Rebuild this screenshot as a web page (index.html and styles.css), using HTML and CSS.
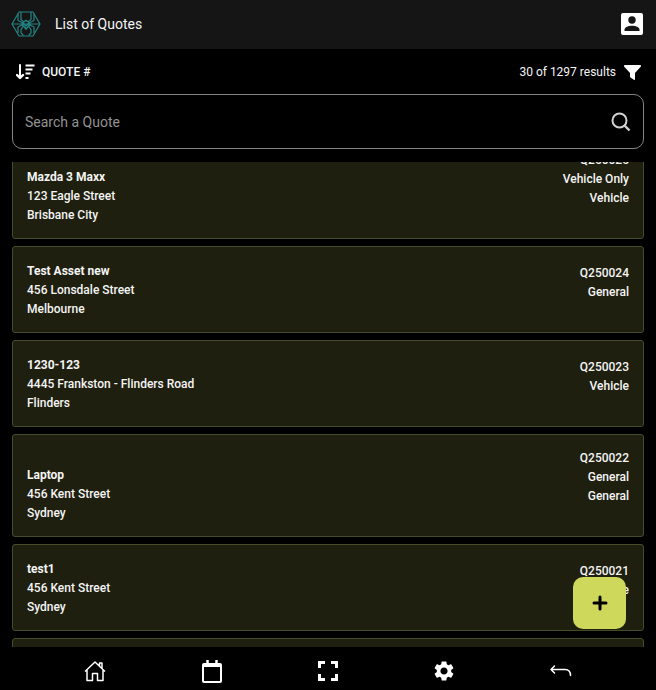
FILE: index.html
```html
<!DOCTYPE html>
<html lang="en">
<head>
<meta charset="utf-8">
<meta name="viewport" content="width=device-width, initial-scale=1">
<title>List of Quotes</title>
<link rel="stylesheet" href="styles.css">
</head>
<body>

    <header class="topbar">
        <a class="logo" href="#" aria-label="Home">
            <svg width="30" height="28" viewBox="0 0 30 28" fill="none" stroke="#238583" stroke-width="1.2">
                <path d="M8 2h14l7 12-7 12H8L1 14z"/>
                <path d="M10 2v7.500l3 2.500M20 2v7.500L17 12M7 4v6.500l5 2.500M23 4v6.500L18 13M1 14h28"/>
                <path d="M12 14.500L7 17v6M18 14.500l5 2.500v6M12.500 16L10 19.500V23l2.500 2.500M17.500 16l2.500 3.500V23l-2.500 2.500"/>
                <path d="M12 12.500l3-2 3 2 1 2-4 4.500-4-4.500zM12 13l3 3 3-3" stroke-width="1.5"/>
            </svg>
        </a>
        <h1>List of Quotes</h1>
        <button class="icon-button" aria-label="Account">
            <svg width="22" height="22" viewBox="0 0 22 22">
                <rect width="22" height="22" rx="2" fill="#fff"/>
                <circle cx="11" cy="7" r="3.7" fill="#151515"/>
                <path d="M3.5 18v-1.3c0-2.4 4.2-3.9 7.5-3.9s7.5 1.5 7.5 3.9V18z" fill="#151515"/>
            </svg>
        </button>
    </header>

    <div class="toolbar">
        <button class="sort">
            <svg width="19" height="16" viewBox="0 0 19 16" fill="none" stroke="#fff" stroke-width="2">
                <path d="M4 1v12" stroke-linecap="round"/>
                <path d="M1 11l3 3 3-3" stroke-width="2.4" stroke-linecap="round" stroke-linejoin="round"/>
                <path d="M9.500 1.500h9M9.500 5.500h7M9.500 9.500h5M9.500 14h3"/>
            </svg>
            QUOTE #
        </button>
        <button class="filter">
            30 of 1297 results
            <svg width="17" height="15" viewBox="0 0 17 15" fill="#fff">
                <path d="M1 0h15c.9 0 1.300 1 .7 1.700L11 8v6.300c0 .6-.6.9-1.100.5L6.500 12.500c-.3-.2-.5-.5-.5-.9V8L.3 1.700C-.3 1 .1 0 1 0z"/>
            </svg>
        </button>
    </div>

    <form class="search">
        <input type="text" aria-label="Search a Quote" placeholder="Search a Quote">
        <button type="button" class="icon-button" aria-label="Search">
            <svg width="20" height="20" viewBox="0 0 20 20" fill="none" stroke="#d0d0d0" stroke-width="2">
                <circle cx="8.500" cy="8.500" r="7"/>
                <path d="M13 13l5.500 5.500" stroke-width="2.400"/>
            </svg>
        </button>
    </form>

    <ul class="quotes" id="quotes">
        <li class="quote tall">
            <div class="asset">
                <strong>Mazda 3 Maxx</strong>
                <span>123 Eagle Street</span>
                <span>Brisbane City</span>
            </div>
            <div class="info">
                <span>Q250025</span>
                <span>Vehicle Only</span>
                <span>Vehicle</span>
            </div>
        </li>
        <li class="quote">
            <div class="asset">
                <strong>Test Asset new</strong>
                <span>456 Lonsdale Street</span>
                <span>Melbourne</span>
            </div>
            <div class="info">
                <span>Q250024</span>
                <span>General</span>
            </div>
        </li>
        <li class="quote">
            <div class="asset">
                <strong>1230-123</strong>
                <span>4445 Frankston - Flinders Road</span>
                <span>Flinders</span>
            </div>
            <div class="info">
                <span>Q250023</span>
                <span>Vehicle</span>
            </div>
        </li>
        <li class="quote tall">
            <div class="asset">
                <strong>Laptop</strong>
                <span>456 Kent Street</span>
                <span>Sydney</span>
            </div>
            <div class="info">
                <span>Q250022</span>
                <span>General</span>
                <span>General</span>
            </div>
        </li>
        <li class="quote">
            <div class="asset">
                <strong>test1</strong>
                <span>456 Kent Street</span>
                <span>Sydney</span>
            </div>
            <div class="info">
                <span>Q250021</span>
                <span>Vehicle</span>
            </div>
        </li>
        <li class="quote"></li>
    </ul>

    <button class="add" aria-label="Add quote">
        <svg width="16" height="16" viewBox="0 0 16 16" stroke="#000" stroke-width="3" stroke-linecap="round">
            <path d="M8 2v12M2 8h12"/>
        </svg>
    </button>

    <nav class="bottombar">
        <a href="#" aria-label="Home">
            <svg width="22" height="22" viewBox="0 0 22 22" fill="none" stroke="#fff" stroke-width="1.500" stroke-linejoin="round">
                <path d="M1 11.500L11 2l10 9.500M3 10v10.500h5.500v-7h5v7H19V10M15.500 6V3H18v5.500"/>
            </svg>
        </a>
        <a href="#" aria-label="Calendar">
            <svg width="20" height="24" viewBox="0 0 20 24" fill="none" stroke="#fff" stroke-width="2">
                <rect x="1" y="5" width="18" height="18" rx="1"/>
                <path d="M1 6.500h18" stroke-width="3"/>
                <path d="M5.500 1v4M14.500 1v4" stroke-width="2.500"/>
            </svg>
        </a>
        <a href="#" aria-label="Scan">
            <svg width="20" height="20" viewBox="0 0 20 20" fill="none" stroke="#fff" stroke-width="3">
                <path d="M1.500 7V1.500H7M13 1.500h5.500V7M18.500 13v5.500H13M7 18.500H1.500V13"/>
            </svg>
        </a>
        <a href="#" aria-label="Settings">
            <svg width="22" height="22" viewBox="1 1 22 22" fill="#fff">
                <path d="M19.140 12.940c.04-.3.060-.61.060-.94 0-.32-.02-.64-.07-.94l2.030-1.580c.18-.14.230-.41.120-.61l-1.920-3.320c-.12-.22-.37-.29-.59-.22l-2.390.96c-.5-.38-1.030-.7-1.620-.94l-.36-2.540c-.04-.24-.24-.41-.48-.41h-3.840c-.24 0-.43.170-.47.410l-.36 2.540c-.59.240-1.130.570-1.620.940l-2.390-.96c-.22-.08-.47 0-.59.220L2.740 8.870c-.12.210-.08.470.120.610l2.030 1.580c-.05.300-.09.630-.09.940s.02.640.070.940l-2.030 1.580c-.18.140-.23.410-.12.610l1.920 3.320c.12.220.37.290.590.220l2.390-.96c.5.380 1.030.7 1.620.94l.36 2.540c.05.240.24.410.48.410h3.840c.24 0 .44-.17.470-.41l.36-2.540c.59-.24 1.130-.56 1.620-.94l2.390.96c.22.080.47 0 .59-.22l1.920-3.320c.12-.22.070-.47-.12-.61l-2.010-1.580zM12 15.600c-1.980 0-3.600-1.620-3.600-3.600s1.620-3.600 3.600-3.600 3.600 1.620 3.600 3.600-1.620 3.600-3.600 3.600z"/>
            </svg>
        </a>
        <a href="#" aria-label="Back">
            <svg width="22" height="12" viewBox="0 0 22 12" fill="none" stroke="#fff" stroke-width="1.500" stroke-linecap="round" stroke-linejoin="round">
                <path d="M4.500 1L1 4.500 4.500 8M1 4.500h14c3.500 0 5.500 2.500 5.500 6"/>
            </svg>
        </a>
    </nav>

    <script>
        // the list opens slightly scrolled
        document.getElementById('quotes').scrollTop = 26;
    </script>
</body>
</html>
```
FILE: styles.css
```css
* {
  box-sizing: border-box;
}
body {
  margin: 0;
  height: 100vh;
  display: flex;
  flex-direction: column;
  background-color: #000;
  color: #f4f4f4;
  font-family: Roboto, sans-serif;
  font-size: 12px;
}
button {
  display: flex;
  align-items: center;
  padding: 0;
  border: none;
  background: none;
  color: inherit;
  font: inherit;
  cursor: pointer;
}
svg {
  display: block;
}
.topbar {
  display: flex;
  align-items: center;
  gap: 14px;
  padding: 10px 13px 11px 11px;
  background-color: #151515;
}
h1 {
  flex: 1;
  margin: 0;
  font-size: 14px;
  font-weight: 400;
}
.toolbar {
  display: flex;
  justify-content: space-between;
  padding: 15px 15px 14px 16px;
  line-height: 16px;
}
.sort {
  gap: 7px;
  font-weight: 500;
}
.filter {
  gap: 8px;
}
.search {
  display: flex;
  align-items: center;
  height: 55px;
  margin: 0 12px 13px;
  padding: 0 12px;
  border: 1px solid #858585;
  border-radius: 10px;
}
.search input {
  flex: 1;
  min-width: 0;
  padding: 0;
  border: none;
  outline: none;
  background: none;
  color: #f4f4f4;
  font: inherit;
  font-size: 14px;
}
.search input::placeholder {
  color: #929292;
}
.quotes {
  flex: 1;
  min-height: 0;
  margin: 0;
  padding: 0 12px;
  display: flex;
  flex-direction: column;
  gap: 7px;
  overflow-y: auto;
  scrollbar-width: none;
  list-style: none;
}
.quote {
  flex: none;
  display: flex;
  justify-content: space-between;
  min-height: 87px;
  padding: 14px 14px 13px;
  border: 1px solid #444c2a;
  border-radius: 3px;
  background-color: #1f1f0f;
  font-weight: 500;
  line-height: 19px;
}
.tall {
  min-height: 103px;
}
.asset,
.info {
  display: flex;
  flex-direction: column;
}
.asset {
  justify-content: flex-end;
}
.info {
  padding-top: 3px;
  text-align: right;
}
.tall .info {
  padding-top: 0;
}
.asset strong {
  font-weight: 700;
}
.add {
  position: fixed;
  right: 30px;
  bottom: 61px;
  justify-content: center;
  width: 53px;
  height: 52px;
  border-radius: 10px;
  background-color: #ced95b;
}
.bottombar {
  display: flex;
  height: 43px;
  padding: 4px 37px 0;
}
.bottombar a {
  flex: 1;
  display: flex;
  align-items: center;
  justify-content: center;
}
```
